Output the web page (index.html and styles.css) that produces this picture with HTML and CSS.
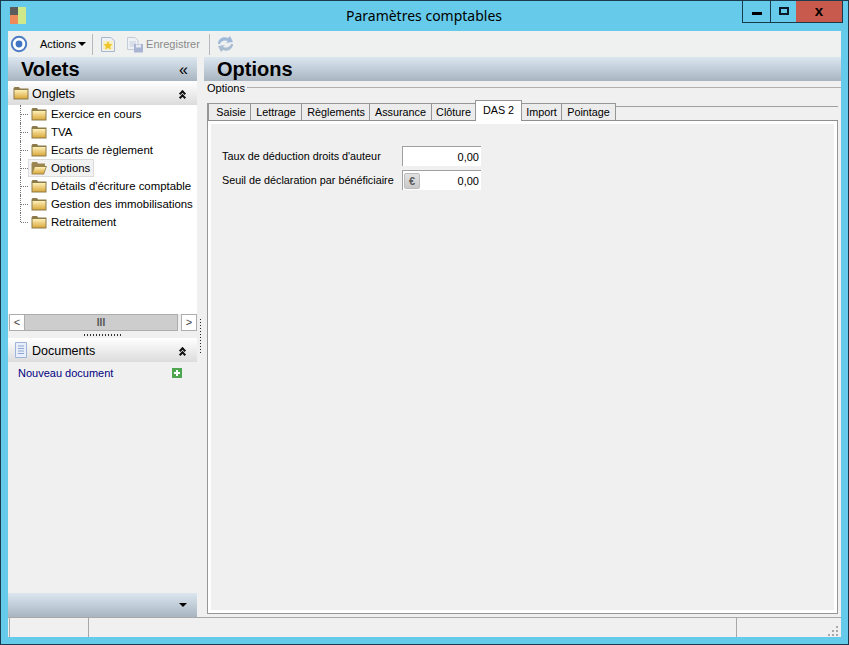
FILE: index.html
```html
<!DOCTYPE html>
<html>
<head>
<meta charset="UTF-8">
<title>Paramètres comptables</title>
<link rel="stylesheet" href="styles.css">
</head>
<body>
<svg class="defs" width="0" height="0">
	<defs>
		<linearGradient id="fold" x1="0" y1="0" x2="0" y2="1">
			<stop offset="0" stop-color="#fdf0b8"/>
			<stop offset="1" stop-color="#dba93c"/>
		</linearGradient>
		<symbol id="folder" viewBox="0 0 16 14">
			<path d="M0.5 2.5 L1.5 1 H6 L7 2.5 H15.5 V13.5 H0.5 Z" fill="#8b7a4a"/>
			<path d="M1.5 4 H14.5 V12.5 H1.5 Z" fill="url(#fold)"/>
		</symbol>
		<symbol id="folderopen" viewBox="0 0 16 14">
			<path d="M0.5 2.5 L1.5 1 H6 L7 2.5 H14 V5 H16 L13 13.5 H0.5 Z" fill="#9b8650"/>
			<path d="M1.5 12.5 L4 6 H14.8 L12.3 12.5 Z" fill="url(#fold)"/>
		</symbol>
	</defs>
</svg>

<div class="window">
	<div class="titlebar">
		<svg class="appicon" width="17" height="17" viewBox="0 0 17 17">
			<rect x="0" y="0" width="8" height="8" fill="#5c5c5c"/>
			<rect x="0" y="8" width="8" height="9" fill="#ee8a5a"/>
			<rect x="8" y="0" width="8" height="17" fill="#cfe88a"/>
		</svg>
		<div class="wintitle">Paramètres comptables</div>
		<div class="winbtns">
			<div class="winbtn"><span class="ico-min"></span></div>
			<div class="winbtn winbtn-max"><span class="ico-max"></span></div>
			<div class="winbtn winbtn-close">x</div>
		</div>
	</div>

	<div class="client">
		<div class="toolbar">
			<svg class="tool-home" width="18" height="18" viewBox="0 0 18 18">
				<circle cx="9" cy="9" r="7.2" fill="#fff" stroke="#4a7cc4" stroke-width="2"/>
				<circle cx="9" cy="9" r="3.4" fill="#3f74c2"/>
			</svg>
			<span class="tool-actions">Actions<i class="caret"></i></span>
			<span class="tool-sep"></span>
			<svg class="tool-new" width="16" height="17" viewBox="0 0 16 17">
				<path d="M1.5 1.5 H11 L14.5 5 V15.5 H1.5 Z" fill="#eef2f8" stroke="#a9b6c9"/>
				<rect x="3" y="5" width="10" height="9" fill="#f8efc0"/>
				<path d="M8 5 L9.4 8 L12.5 8.3 L10.2 10.4 L10.9 13.5 L8 11.9 L5.1 13.5 L5.8 10.4 L3.5 8.3 L6.6 8 Z" fill="#eec52e"/>
			</svg>
			<svg class="tool-save" width="18" height="17" viewBox="0 0 18 17">
				<path d="M1.5 1.5 H9 L12 4.5 V13.5 H1.5 Z" fill="#eef1f6" stroke="#c3ccd9"/>
				<path d="M3.5 6 H10 M3.5 8 H10 M3.5 10 H8" stroke="#c3ccd9"/>
				<rect x="8" y="8" width="9" height="8.5" fill="#a9b4d3"/>
				<rect x="10" y="8.5" width="5" height="3" fill="#e6eaf3"/>
			</svg>
			<span class="tool-label">Enregistrer</span>
			<span class="tool-sep tool-sep2"></span>
			<svg class="tool-refresh" width="17" height="18" viewBox="0 0 17 18">
				<path d="M1 9 C1 4 6 1 11 3 L13 1 L16 7 L9 8 L11 6 C7 4.5 4 6 3 9 Z" fill="#9fb9d8"/>
				<path d="M16 9 C16 14 11 17 6 15 L4 17 L1 11 L8 10 L6 12 C10 13.5 13 12 14 9 Z" fill="#a9bcd0"/>
			</svg>
		</div>

		<div class="main">
			<div class="side">
				<div class="hdr-big side-hdr">
					<span>Volets</span>
					<span class="chev">«</span>
				</div>
				<div class="panel-hdr">
					<svg width="16" height="14"><use href="#folder"/></svg>
					<span class="panel-title">Onglets</span>
					<span class="chev-up"></span>
				</div>
				<div class="tree">
					<div class="tree-row"><div class="node"><svg width="16" height="14"><use href="#folder"/></svg><span>Exercice en cours</span></div></div>
					<div class="tree-row"><div class="node"><svg width="16" height="14"><use href="#folder"/></svg><span>TVA</span></div></div>
					<div class="tree-row"><div class="node"><svg width="16" height="14"><use href="#folder"/></svg><span>Ecarts de règlement</span></div></div>
					<div class="tree-row"><div class="node node-sel"><svg width="16" height="14"><use href="#folderopen"/></svg><span>Options</span></div></div>
					<div class="tree-row"><div class="node"><svg width="16" height="14"><use href="#folder"/></svg><span>Détails d'écriture comptable</span></div></div>
					<div class="tree-row"><div class="node"><svg width="16" height="14"><use href="#folder"/></svg><span>Gestion des immobilisations</span></div></div>
					<div class="tree-row tree-last"><div class="node"><svg width="16" height="14"><use href="#folder"/></svg><span>Retraitement</span></div></div>
				</div>
				<div class="hscroll">
					<div class="sb-btn">&lt;</div>
					<div class="sb-thumb">III</div>
					<div class="sb-btn sb-right">&gt;</div>
				</div>
				<div class="grip"></div>
				<div class="panel-hdr">
					<svg width="16" height="16" viewBox="0 0 16 16">
						<path d="M2.5 0.5 H13.5 V15.5 H2.5 Z" fill="#e8eefa" stroke="#9fb4d8"/>
						<path d="M5 4 H11 M5 6.5 H11 M5 9 H11 M5 11.5 H11" stroke="#8ea6d0"/>
					</svg>
					<span class="panel-title">Documents</span>
					<span class="chev-up"></span>
				</div>
				<div class="doc-link">
					<span>Nouveau document</span>
					<svg width="10" height="10" viewBox="0 0 10 10">
						<rect width="10" height="10" fill="#4ea64e"/>
						<path d="M2 5 H8 M5 2 V8" stroke="#fff" stroke-width="2"/>
					</svg>
				</div>
				<div class="side-fill"></div>
				<div class="side-foot"><i class="caret caret-dark"></i></div>
			</div>

			<div class="vsplit"></div>

			<div class="content">
				<div class="hdr-big"><span>Options</span></div>
				<div class="legend"><span>Options</span><i></i></div>
				<div class="tabs">
					<div class="tab tab-saisie">Saisie</div>
					<div class="tab tab-lettrage">Lettrage</div>
					<div class="tab tab-regl">Règlements</div>
					<div class="tab tab-assur">Assurance</div>
					<div class="tab tab-cloture">Clôture</div>
					<div class="tab tab-on">DAS 2</div>
					<div class="tab tab-import">Import</div>
					<div class="tab tab-pointage">Pointage</div>
				</div>
				<div class="tabpage">
					<div class="form">
						<div class="form-row">
							<label>Taux de déduction droits d'auteur</label>
							<div class="field"><span>0,00</span></div>
						</div>
						<div class="form-row">
							<label>Seuil de déclaration par bénéficiaire</label>
							<div class="field"><i class="euro">€</i><span>0,00</span></div>
						</div>
					</div>
				</div>
			</div>
		</div>

		<div class="statusbar">
			<div class="st st1"></div>
			<div class="st st2"></div>
			<div class="st st3"><svg width="12" height="12" viewBox="0 0 12 12" fill="#a9a9a9"><rect x="9" y="1" width="2" height="2"/><rect x="5" y="5" width="2" height="2"/><rect x="9" y="5" width="2" height="2"/><rect x="1" y="9" width="2" height="2"/><rect x="5" y="9" width="2" height="2"/><rect x="9" y="9" width="2" height="2"/></svg></div>
		</div>
	</div>
</div>
</body>
</html>
```

FILE: styles.css
```css
html,body{
	padding:0;
	margin:0;
	height:100%;
	overflow:hidden;
}
body{
	font-family:"Liberation Sans",Arial,sans-serif;
	font-size:11px;
	color:#000;
}
.defs{
	display:block;
	height:0;
}
.window{
	width:849px;
	height:645px;
	box-sizing:border-box;
	background:#66cbea;
	border:1px solid #1c3a4e;
	display:flex;
	flex-direction:column;
	padding:0 7px 7px 7px;
}

/* title bar */
.titlebar{
	height:30px;
	flex:none;
	display:flex;
	align-items:flex-start;
}
.appicon{
	margin:6px 0 0 2px;
}
.wintitle{
	flex:1;
	text-align:center;
	font-family:"Noto Sans",sans-serif;
	font-size:14px;
	line-height:30px;
	padding-left:79px;
}
.winbtns{
	display:flex;
	height:21px;
	border:1px solid #1c3a4e;
	border-top:none;
	margin-right:-2px;
}
.winbtn{
	width:27px;
	border-right:1px solid #1c3a4e;
	display:flex;
	align-items:center;
	justify-content:center;
}
.winbtn-max{
	width:25px;
	border-right:none;
}
.winbtn-close{
	width:46px;
	border-right:none;
	background:#c75a4c;
	font:bold 15px "Liberation Sans",sans-serif;
	padding-bottom:3px;
	box-sizing:border-box;
}
.ico-min{
	width:10px;
	height:3px;
	background:#000;
	margin-top:4px;
}
.ico-max{
	width:6px;
	height:4px;
	border:2px solid #0a1a2a;
	margin-top:-2px;
}

.client{
	flex:1;
	min-height:0;
	background:#f0f0f0;
	display:flex;
	flex-direction:column;
}

/* toolbar */
.toolbar{
	height:26px;
	flex:none;
	display:flex;
	align-items:center;
	background:#eff0f0;
	padding-left:2px;
}
.tool-actions{
	margin-left:12px;
	display:flex;
	align-items:center;
}
.caret{
	display:inline-block;
	width:0;
	height:0;
	border-left:4px solid transparent;
	border-right:4px solid transparent;
	border-top:4px solid #000;
	margin-left:2px;
}
.tool-sep{
	width:1px;
	height:21px;
	background:#b4b9bd;
	margin:0 7px 0 6px;
}
.tool-save{
	margin-left:10px;
}
.tool-label{
	color:#8a8a8a;
	margin-left:2px;
}
.tool-sep2{
	margin-left:9px;
}

.main{
	flex:1;
	min-height:0;
	display:flex;
}

/* left side */
.side{
	width:189px;
	flex:none;
	display:flex;
	flex-direction:column;
}
.hdr-big{
	height:24px;
	flex:none;
	box-sizing:border-box;
	padding-top:1px;
	background:linear-gradient(#dbe6f0,#a8b5c0);
	display:flex;
	align-items:center;
	justify-content:space-between;
	font-size:20px;
	font-weight:bold;
	padding-left:13px;
}
.side-hdr{
	padding-right:9px;
}
.chev{
	font-size:16px;
	font-weight:normal;
	line-height:18px;
}
.panel-hdr{
	height:24px;
	flex:none;
	display:flex;
	align-items:center;
	background:linear-gradient(#ffffff,#dcdcdc);
	padding:0 9px 0 5px;
}
.panel-title{
	flex:1;
	margin:1px 0 0 3px;
	font-size:12.5px;
}
.chev-up{
	width:9px;
	height:9px;
	position:relative;
}
.chev-up::before,.chev-up::after{
	content:"";
	position:absolute;
	left:1px;
	width:3px;
	height:3px;
	border-left:2px solid #111;
	border-top:2px solid #111;
	transform:rotate(45deg);
}
.chev-up::before{
	top:2px;
}
.chev-up::after{
	top:6px;
}

/* tree */
.tree{
	height:209px;
	flex:none;
	background:#fff;
	overflow:hidden;
	font-size:11.4px;
}
.tree-row{
	height:18px;
	display:flex;
	align-items:center;
	white-space:nowrap;
	border-left:1px dotted #777;
	margin-left:12px;
}
.tree-row::before{
	content:"";
	width:7px;
	flex:none;
	border-top:1px dotted #777;
}
.tree-last{
	border-left:1px solid transparent;
	background:repeating-linear-gradient(#777 0 1px,transparent 1px 2px) 0 0/1px 50% no-repeat;
	background-origin:border-box;
}
.node{
	display:flex;
	align-items:center;
	height:18px;
	box-sizing:border-box;
	padding:0 3px 0 2px;
	border:1px solid transparent;
}
.node svg{
	flex:none;
}
.node span{
	margin-left:4px;
}
.node-sel{
	background:#f2f2f2;
	border-color:#dcdcdc;
}
.hscroll{
	height:17px;
	flex:none;
	display:flex;
	background:#f0f0f0;
	padding-left:1px;
}
.sb-btn{
	width:16px;
	box-sizing:border-box;
	background:#fff;
	border:1px solid #adadad;
	text-align:center;
	line-height:14px;
	font-size:11px;
	color:#444;
}
.sb-right{
	margin-left:3px;
}
.sb-thumb{
	flex:1;
	background:#cdcdcd;
	border:1px solid #adadad;
	border-left:none;
	text-align:center;
	font-size:10px;
	font-weight:bold;
	line-height:15px;
	color:#555;
}
.grip{
	height:7px;
	flex:none;
	background:radial-gradient(circle,#333 40%,transparent 45%) center/3px 2px repeat-x;
	margin:0 75px;
}
.doc-link{
	display:flex;
	justify-content:space-between;
	align-items:center;
	color:#000080;
	padding:2px 15px 0 10px;
	height:18px;
}
.side-fill{
	flex:1;
}
.side-foot{
	height:24px;
	flex:none;
	background:linear-gradient(#dbe6f0,#a8b5c0);
	display:flex;
	align-items:center;
	justify-content:flex-end;
	padding-right:10px;
}

/* splitter dots */
.vsplit{
	width:7px;
	flex:none;
	height:36px;
	margin-top:262px;
	background:repeating-linear-gradient(#222 0 1px,transparent 1px 3px) 3px 0/1px 100% no-repeat;
}

/* right side */
.content{
	flex:1;
	min-width:0;
	display:flex;
	flex-direction:column;
}
.content .hdr-big{
	justify-content:flex-start;
}
.legend{
	height:15px;
	flex:none;
	box-sizing:border-box;
	padding:0 0 2px 3px;
	display:flex;
	align-items:center;
}
.legend i{
	flex:1;
	border-top:1px solid #b0b0b0;
	margin-left:2px;
}
.tabs{
	display:flex;
	align-items:flex-end;
	height:25px;
	flex:none;
	margin:0 3px;
	border-bottom:1px solid #8f8f8f;
	box-sizing:border-box;
	background:linear-gradient(#a0a0a0,#a0a0a0) 0 10px/100% 1px no-repeat;
	font-size:10.8px;
}
.tab{
	height:16px;
	line-height:17px;
	text-align:center;
	box-sizing:content-box;
	background:#ececec;
	border:1px solid #969696;
	border-bottom:none;
	margin-right:-1px;
	white-space:nowrap;
}
/* widths follow the captions of the original tab strip */
.tab-saisie{
	width:38px;
	padding-left:3px;
	border-left-width:2px;
}
.tab-lettrage{
	width:50px;
}
.tab-regl{
	width:66px;
	padding-left:1px;
}
.tab-assur{
	width:61px;
}
.tab-cloture{
	width:43px;
}
.tab-on{
	width:45px;
	height:20px;
	line-height:19px;
	background:#fff;
	margin-bottom:-1px;
	position:relative;
}
.tab-import{
	width:39px;
}
.tab-pointage{
	width:53px;
}
.tabpage{
	flex:1;
	margin:0 3px 3px 3px;
	background:#f0f0f0;
	border:1px solid #969696;
	border-top:none;
	box-shadow:inset 0 0 0 3px #fff;
	padding:25px 0 0 14px;
	min-height:0;
}
.form-row{
	display:flex;
	align-items:flex-start;
	height:20px;
	margin-bottom:4px;
	font-size:10.8px;
}
.form-row label{
	width:180px;
	flex:none;
	white-space:nowrap;
	line-height:21px;
}
.field{
	width:79px;
	height:20px;
	box-sizing:border-box;
	background:#fff;
	border-left:1px solid #a0a0a0;
	border-top:1px solid #a0a0a0;
	display:flex;
	align-items:center;
	justify-content:flex-end;
	padding-right:2px;
	font-size:11px;
}
.euro{
	width:16px;
	height:16px;
	box-sizing:border-box;
	margin:0 auto 0 1px;
	background:linear-gradient(#e2e2e2,#c9c9c9);
	border:1px solid #bcbcbc;
	border-radius:2px;
	font-style:normal;
	text-align:center;
	line-height:14px;
	color:#5c5c5c;
	font-weight:bold;
}

/* status bar */
.statusbar{
	height:19px;
	flex:none;
	display:flex;
	border-top:1px solid #a8a8a8;
	padding-left:1px;
	background:#f0f0f0;
}
.st{
	border-left:1px solid #a8a8a8;
}
.st1{
	width:78px;
}
.st2{
	flex:1;
}
.st3{
	width:102px;
	display:flex;
	justify-content:flex-end;
	align-items:flex-end;
	padding-right:2px;
}
```
